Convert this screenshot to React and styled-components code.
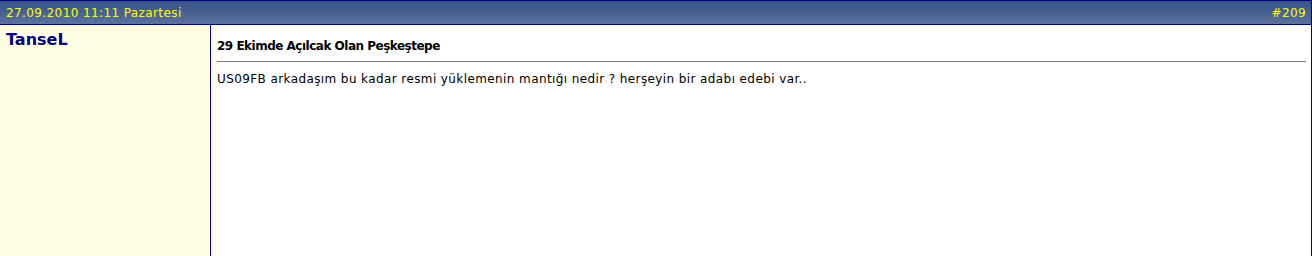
import styled, { createGlobalStyle } from "styled-components";

const GlobalStyle = createGlobalStyle`
  html, body {
    margin: 0;
    padding: 0;
    background: #ffffff;
  }
  body {
    font-family: "DejaVu Sans", Verdana, sans-serif;
  }
`;

const Post = styled.div`
  width: 1312px;
  height: 256px;
  box-sizing: border-box;
  border-top: 1px solid #000080;
  border-right: 1px solid #000080;
  display: flex;
  flex-direction: column;
  overflow: hidden;
`;

const HeaderBar = styled.div`
  height: 23px;
  display: flex;
  align-items: center;
  justify-content: space-between;
  padding: 0 5px 0 6px;
  background: linear-gradient(to bottom, #36538c 0%, #48618f 50%, #5d729d 100%);
  border-bottom: 1px solid #000080;
  color: #ffff00;
  font-size: 12px;
  letter-spacing: 0.4px;
`;

const Body = styled.div`
  flex: 1;
  display: flex;
`;

const Author = styled.div`
  width: 204px;
  flex-shrink: 0;
  background: #ffffe5;
  border-right: 1px solid #000080;
  padding: 5px 0 0 6px;
  color: #000080;
  font-weight: bold;
  font-size: 16px;
`;

const Content = styled.div`
  flex: 1;
  padding: 14px 5px 0 6px;
  color: #000000;
`;

const Title = styled.div`
  font-size: 12px;
  font-weight: bold;
  letter-spacing: -0.5px;
  line-height: 14px;
  padding-bottom: 8px;
  border-bottom: 1px solid #808080;
`;

const Message = styled.div`
  padding-top: 10px;
  font-size: 12px;
  letter-spacing: 0.4px;
`;

export default function App() {
  return (
    <>
      <GlobalStyle />
      <Post>
        <HeaderBar>
          <span>27.09.2010 11:11 Pazartesi</span>
          <span>#209</span>
        </HeaderBar>
        <Body>
          <Author>TanseL</Author>
          <Content>
            <Title>29 Ekimde Açılcak Olan Peşkeştepe</Title>
            <Message>
              US09FB arkadaşım bu kadar resmi yüklemenin mantığı nedir ? herşeyin bir adabı edebi var..
            </Message>
          </Content>
        </Body>
      </Post>
    </>
  );
}
